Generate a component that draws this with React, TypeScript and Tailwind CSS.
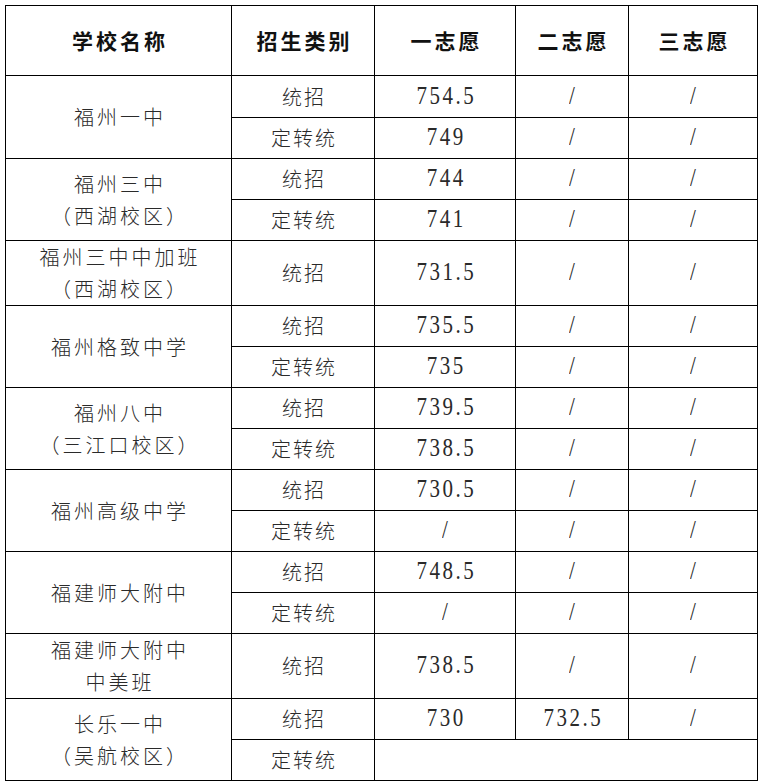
import type { ReactNode } from 'react'

type Row = {
  kind: string
  first: string
  second: string
  third: string
  empty?: boolean
}

type Group = {
  name: string[]
  rows: Row[]
  tall?: boolean
}

const S = '/'

const groups: Group[] = [
  {
    name: ['福州一中'],
    rows: [
      { kind: '统招', first: '754.5', second: S, third: S },
      { kind: '定转统', first: '749', second: S, third: S },
    ],
  },
  {
    name: ['福州三中', '（西湖校区）'],
    rows: [
      { kind: '统招', first: '744', second: S, third: S },
      { kind: '定转统', first: '741', second: S, third: S },
    ],
  },
  {
    name: ['福州三中中加班', '（西湖校区）'],
    tall: true,
    rows: [{ kind: '统招', first: '731.5', second: S, third: S }],
  },
  {
    name: ['福州格致中学'],
    rows: [
      { kind: '统招', first: '735.5', second: S, third: S },
      { kind: '定转统', first: '735', second: S, third: S },
    ],
  },
  {
    name: ['福州八中', '（三江口校区）'],
    rows: [
      { kind: '统招', first: '739.5', second: S, third: S },
      { kind: '定转统', first: '738.5', second: S, third: S },
    ],
  },
  {
    name: ['福州高级中学'],
    rows: [
      { kind: '统招', first: '730.5', second: S, third: S },
      { kind: '定转统', first: S, second: S, third: S },
    ],
  },
  {
    name: ['福建师大附中'],
    rows: [
      { kind: '统招', first: '748.5', second: S, third: S },
      { kind: '定转统', first: S, second: S, third: S },
    ],
  },
  {
    name: ['福建师大附中', '中美班'],
    tall: true,
    rows: [{ kind: '统招', first: '738.5', second: S, third: S }],
  },
  {
    name: ['长乐一中', '（吴航校区）'],
    rows: [
      { kind: '统招', first: '730', second: '732.5', third: S },
      { kind: '定转统', first: '', second: '', third: '', empty: true },
    ],
  },
]

const cjk = "font-['Noto_Sans_CJK_SC',sans-serif]"
const cell = 'border-[1.5px] border-black text-center align-middle p-0'

// scores: tall, thin digits with wide spacing, like the half-width Song digits
function Num({ children }: { children: ReactNode }) {
  return (
    <span className="inline-block scale-y-[1.22] pl-[2.5px] font-['Liberation_Serif',serif] text-[21px] tracking-[2.5px] text-[#2a2a2a]">
      {children}
    </span>
  )
}

function Head({ children }: { children: ReactNode }) {
  return (
    <th className={`${cell} ${cjk} pl-[3px] text-[21px] font-bold tracking-[3px] text-[#111]`}>
      {children}
    </th>
  )
}

export default function App() {
  return (
    <div className="min-h-screen bg-white pl-[5px] pt-[5px]">
      <table className="w-[752px] table-fixed border-collapse">
        <colgroup>
          <col className="w-[226px]" />
          <col className="w-[143px]" />
          <col className="w-[141px]" />
          <col className="w-[113px]" />
          <col className="w-[129px]" />
        </colgroup>
        <thead>
          <tr className="h-[70px]">
            <Head>学校名称</Head>
            <Head>招生类别</Head>
            <Head>一志愿</Head>
            <Head>二志愿</Head>
            <Head>三志愿</Head>
          </tr>
        </thead>
        <tbody>
          {groups.map((g, gi) =>
            g.rows.map((r, ri) => (
              <tr
                key={`${gi}-${ri}`}
                className={g.tall ? 'h-[64px]' : gi === 0 && ri === 0 ? 'h-[42px]' : 'h-[41px]'}
              >
                {ri === 0 && (
                  <td
                    rowSpan={g.rows.length}
                    className={`${cell} ${cjk} pl-[3px] text-[20px] font-light leading-[32px] tracking-[3px] text-[#2a2a2a]`}
                  >
                    {g.name.map((line) => (
                      <div key={line}>{line}</div>
                    ))}
                  </td>
                )}
                <td className={`${cell} ${cjk} pl-[2px] text-[20px] font-light tracking-[2px] text-[#2a2a2a]`}>
                  {r.kind}
                </td>
                {r.empty ? (
                  <td colSpan={3} className={cell} />
                ) : (
                  <>
                    <td className={cell}>
                      <Num>{r.first}</Num>
                    </td>
                    <td className={cell}>
                      <Num>{r.second}</Num>
                    </td>
                    <td className={cell}>
                      <Num>{r.third}</Num>
                    </td>
                  </>
                )}
              </tr>
            )),
          )}
        </tbody>
      </table>
    </div>
  )
}
